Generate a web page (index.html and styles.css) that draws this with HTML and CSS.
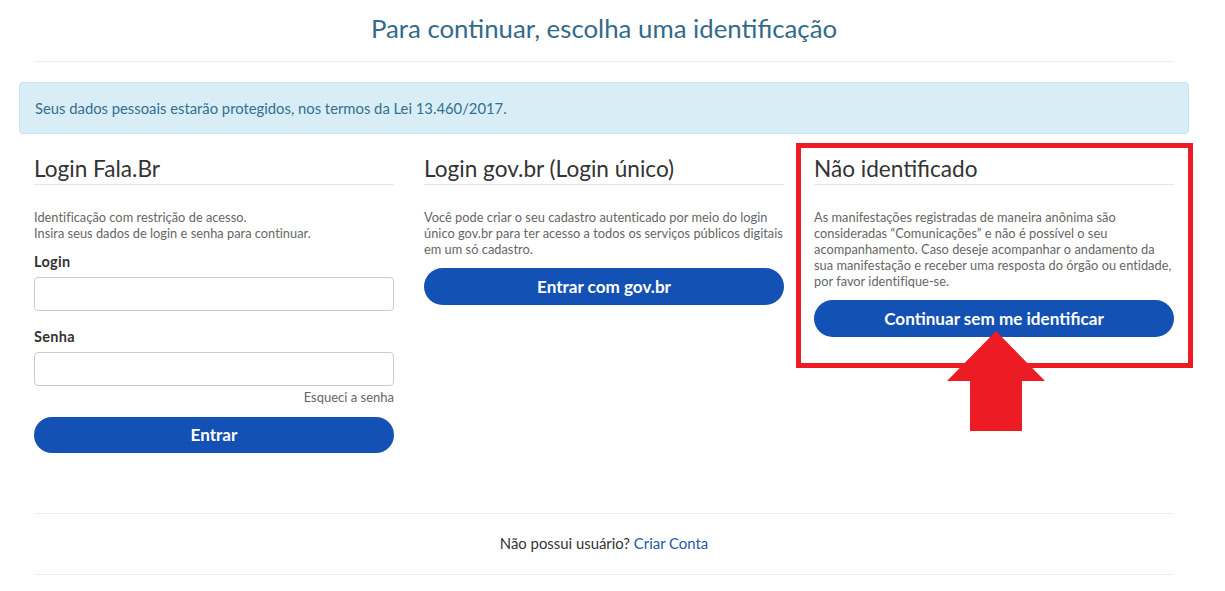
FILE: index.html
```html
<!DOCTYPE html>
<html lang="pt-BR">
<head>
<meta charset="utf-8">
<title>Identificação</title>
<link rel="stylesheet" href="styles.css">
</head>
<body>
<div class="container">
  <h1 class="page-title">Para continuar, escolha uma identificação</h1>
  <hr class="rule">
  <div class="alert">Seus dados pessoais estarão protegidos, nos termos da Lei 13.460/2017.</div>
  <div class="cols">
    <section class="col">
      <h2 class="col-title">Login Fala.Br</h2>
      <p class="desc">Identificação com restrição de acesso.<br>Insira seus dados de login e senha para continuar.</p>
      <div class="field">
        <label class="label">Login</label>
        <div class="input"></div>
      </div>
      <div class="field">
        <label class="label">Senha</label>
        <div class="input"></div>
      </div>
      <div class="forgot">Esqueci a senha</div>
      <button class="btn btn-entrar">Entrar</button>
    </section>
    <section class="col">
      <h2 class="col-title">Login gov.br (Login único)</h2>
      <p class="desc">Você pode criar o seu cadastro autenticado por meio do login único gov.br para ter acesso a todos os serviços públicos digitais em um só cadastro.</p>
      <button class="btn">Entrar com gov.br</button>
    </section>
    <section class="col col-anon">
      <h2 class="col-title">Não identificado</h2>
      <p class="desc">As manifestações registradas de maneira anônima são consideradas “Comunicações” e não é possível o seu acompanhamento. Caso deseje acompanhar o andamento da sua manifestação e receber uma resposta do órgão ou entidade, por favor identifique-se.</p>
      <button class="btn">Continuar sem me identificar</button>
      <div class="highlight"></div>
      <svg class="arrow" width="98" height="100" viewBox="0 0 98 100"><polygon points="49,0 98,50 75,50 75,100 23,100 23,50 0,50" fill="#ed1c24"/></svg>
    </section>
  </div>
  <div class="footer">
    <hr class="rule">
    <p class="footer-text">Não possui usuário? <a class="link">Criar Conta</a></p>
    <hr class="rule">
  </div>
</div>
</body>
</html>
```

FILE: styles.css
```css
* { box-sizing: border-box; }
html, body { margin: 0; padding: 0; background: #fff; }
body {
  font-family: "Lato", "Open Sans", sans-serif;
  color: #333;
  font-size: 14px;
}
.container {
  width: 1170px;
  margin-left: 19px;
}
.page-title {
  margin: 0;
  padding-top: 13px;
  font-size: 25.8px;
  font-weight: 400;
  line-height: 30px;
  text-align: center;
  color: #336a8c;
}
.rule {
  margin: 18px 15px 0;
  border: 0;
  border-top: 1px solid #eeeeee;
  height: 0;
}
.alert {
  margin-top: 20px;
  height: 52px;
  padding: 0 15px;
  display: flex;
  align-items: center;
  background: #d9edf7;
  border: 1px solid #bce8f1;
  border-radius: 4px;
  color: #31708f;
  font-size: 14.8px;
}
.cols {
  display: grid;
  grid-template-columns: repeat(3, 1fr);
}
.col {
  position: relative;
  padding: 0 15px;
}
.col-title {
  margin: 23px 0 0;
  padding-bottom: 3px;
  font-size: 22.6px;
  font-weight: 400;
  line-height: 24px;
  color: #333;
  border-bottom: 1px solid #e5e5e5;
}
.desc {
  margin: 24px 0 0;
  font-size: 12.8px;
  letter-spacing: 0.02px;
  line-height: 16px;
  color: #666;
}
.field { margin-top: 11px; }
.field + .field { margin-top: 16px; }
.label {
  display: block;
  font-weight: 700;
  font-size: 14.5px;
  letter-spacing: 0.3px;
  line-height: 20px;
  margin-bottom: 5px;
  color: #333;
}
.input {
  height: 34px;
  border: 1px solid #ccc;
  border-radius: 4px;
  background: #fff;
}
.forgot {
  margin-top: 3px;
  text-align: right;
  font-size: 13px;
  line-height: 16px;
  color: #666;
}
.btn {
  display: block;
  width: 100%;
  height: 37px;
  margin-top: 11px;
  border: 0;
  border-radius: 19px;
  background: #1351b4;
  color: #fff;
  font-family: "Lato", "Open Sans", sans-serif;
  font-weight: 700;
  font-size: 17.1px;
  line-height: 37px;
  padding: 0;
}
.btn-entrar { margin-top: 12px; height: 36px; line-height: 36px; }
.highlight {
  position: absolute;
  left: -3px;
  top: 9px;
  width: 397px;
  height: 225px;
  border: 5px solid #ed1c24;
  pointer-events: none;
}
.arrow {
  position: absolute;
  left: 148px;
  top: 197px;
}
.footer { margin-top: 60px; }
.footer .rule { margin-top: 0; }
.footer-text {
  margin: 0;
  height: 60px;
  line-height: 58px;
  text-align: center;
  font-size: 14.9px;
  color: #333;
}
.link { color: #2159a8; text-decoration: none; }
```
